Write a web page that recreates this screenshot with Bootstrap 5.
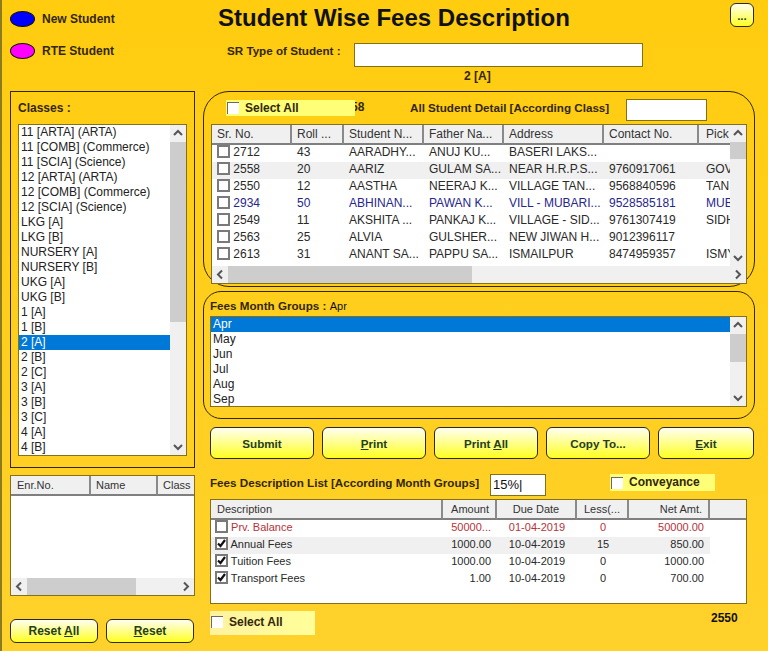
<!DOCTYPE html>
<html lang="en">
<head>
    <meta charset="UTF-8">
    <title>Student Wise Fees Description</title>
    <link href="https://cdn.jsdelivr.net/npm/bootstrap@5.3.3/dist/css/bootstrap.min.css" rel="stylesheet">
    <style>
        html, body { height: 100%; }
        body { width: 768px; height: 651px; overflow: hidden; background: linear-gradient(#ffcc0f, #ffd12b); border-left: 2px solid #8a7a20; font: 12px/15px "Liberation Sans", Arial, sans-serif; color: #111; }
        .lbl { font-weight: 700; color: #33270a; }
        .tight { font-size: 11.65px; }
        .top-area { height: 91px; }
        .legend-box { width: 201px; padding: 3px 0 0 8px; }
        .legend-row { height: 32px; gap: 7px; }
        .oval { width: 25px; height: 16px; border-radius: 50%; border: 1px solid #111; margin-bottom: 1px; }
        .oval-blue { background: #0000ff; }
        .oval-pink { background: #ff00ff; }
        .title-box { width: 500px; }
        .page-title { font: 700 24px/28px "Liberation Sans", Arial, sans-serif; color: #111; margin: 4px 0 0 15px; }
        .type-row { margin-top: 11px; height: 24px; }
        .type-row .lbl { margin: 0 0 10px 24px; width: 127px; }
        .white-input { background: #fff; border: 1px solid #85701a; border-radius: 0; padding: 0 2px; height: 24px; }
        .type-input { width: 289px; }
        .class-name { margin: 2px 0 0 261px; }
        .dots-btn { width: 24px; height: 24px; margin: 3px 0 0 27px; padding: 0 !important; font-size: 10px; border-radius: 6px !important; }
        .main-area { gap: 8px; padding-left: 8px; }
        .left-col { width: 185px; }
        .right-col { width: 552px; }
        .class-panel { height: 377px; border: 1px solid #33270a; padding: 8px 7px 0; }
        .class-panel > .lbl { height: 24px; line-height: 16px; }
        .listing { background: #fff; border: 1px solid #85701a; overflow: hidden; }
        .class-list { height: 332px; }
        .list-items { min-width: 0; color: #222; }
        .list-items div { height: 15px; line-height: 15px; padding-left: 2px; white-space: nowrap; }
        .list-items .picked { background: #0078d7; color: #fff; }
        .vbar { width: 16px; flex: none; background: #f0f0f0; }
        .hbar { height: 17px; flex: none; background: #f0f0f0; }
        .bar-btn { flex: none; color: #555; width: 16px; height: 17px; }
        .bar-thumb { background: #cdcdcd; }
        .panel-round { border: 1px solid #33270a; }
        .students-panel { height: 196px; border-radius: 26px; padding: 8px 7px 0; }
        .chk-label { background: #ffff77; gap: 6px; font-weight: 700; color: #33270a; }
        .select-one { width: 129px; height: 16px; margin-left: 15px; position: relative; z-index: 1; }
        .count-text { margin-left: -4px; width: 59px; }
        .detail-text { width: 216px; }
        .count-input { width: 81px; height: 22px; margin-top: -1px; }
        .head-row { height: 24px; }
        .chk { display: inline-block; width: 13px; height: 13px; border: 2px solid #7a7a7a; background: #fff; vertical-align: -2px; flex: none; }
        .chk svg { display: block; width: 9px; height: 9px; }
        .chk-flat { width: 12px; height: 12px; border-width: 1px 0 0 1px; border-color: #6a6a6a; margin-left: 1px; }
        .student-grid { height: 160px; }
        .student-grid tr > :last-child { padding-left: 7px; }
        .grid-wrap { background: #fff; border: 1px solid #85701a; overflow: hidden; }
        .grid-body { min-width: 0; overflow: hidden; }
        .gridtbl { table-layout: fixed; margin: 0; font-size: 12px; line-height: 15px; --bs-table-bg: transparent; color: #2a2a2a; border-collapse: separate; border-spacing: 0; }
        .gridtbl th { height: 20px; padding: 2px 0 0 5px; font-weight: 400; background: #f0f0f0; border-bottom: 2px solid #7f7f7f; border-right: 2px solid #8a8a8a; white-space: nowrap; overflow: hidden; color: #333; }
        .gridtbl td { height: 17px; padding: 0 0 0 5px; border: 0; white-space: nowrap; overflow: hidden; }
        .small-grid { font-size: 11px; }
        .gridtbl .zebra td { background: #f0f0f0; }
        .gridtbl .blue-row td { color: #26268c; }
        .gridtbl .red-row td { color: #b5323a; }
        .gridtbl .no-fill { background: #fff !important; }
        .gridtbl .no-line { border-right: 0; }
        .gridtbl .end { text-align: right; padding-left: 0; padding-right: 6px; }
        .gridtbl .mid { text-align: center; padding-left: 0; }
        .months-panel { height: 128px; margin-top: 4px; border-radius: 18px; padding: 6px 7px 0 6px; }
        .months-panel .head-row { height: 18px; }
        .month-list { height: 91px; }
        .action-row { margin-top: 8px; padding-left: 7px; gap: 8px; }
        .yel-btn { background: linear-gradient(#fffff2, #ffff22); border: 1px solid #2b2b1a; border-radius: 6px; color: #24401a; font: 700 11.65px/15px "Liberation Sans", Arial, sans-serif; padding: 0; }
        .yel-btn:hover { background: linear-gradient(#fffff2, #ffff22); border-color: #2b2b1a; color: #24401a; }
        .action-row .yel-btn { width: 104px; height: 32px; }
        .action-row .exit-btn { width: 96px; }
        .fees-head { margin-top: 16px; padding-left: 7px; height: 24px; }
        .fees-head .lbl { width: 280px; }
        .pct-input { width: 56px; height: 22px; line-height: 20px; font-size: 13px; margin-top: -1px; }
        .convey { width: 105px; height: 17px; margin-left: 64px; margin-top: -1px; }
        .fees-grid { height: 105px; margin-left: 7px; width: 537px; }
        .fees-grid td:first-child { padding-left: 4px; }
        .fees-grid th:first-child { padding-left: 6px; }
        .fees-foot { margin: 7px 0 0 7px; }
        .select-two { width: 105px; height: 24px; gap: 6px; background: linear-gradient(90deg, #fff2a0, #ffff99); padding-bottom: 2px; }
        .roll-no { margin-left: 396px; font-weight: 700; }
        .mini-grid { height: 121px; margin-top: 7px; }
        .mini-grid th:first-child { padding-left: 6px; }
        .reset-row { margin-top: 23px; gap: 8px; }
        .reset-row .yel-btn { width: 88px; height: 24px; font-size: 12px; }
    </style>
</head>
<body>

<svg width="0" height="0" class="position-absolute">
    <symbol id="up" viewBox="0 0 16 17"><path d="M4 10l4-4 4 4" fill="none" stroke="#555" stroke-width="2"/></symbol>
    <symbol id="down" viewBox="0 0 16 17"><path d="M4 7l4 4 4-4" fill="none" stroke="#555" stroke-width="2"/></symbol>
    <symbol id="left" viewBox="0 0 16 17"><path d="M10 4.500l-4 4 4 4" fill="none" stroke="#555" stroke-width="2"/></symbol>
    <symbol id="right" viewBox="0 0 16 17"><path d="M6 4.500l4 4-4 4" fill="none" stroke="#555" stroke-width="2"/></symbol>
    <symbol id="tick" viewBox="0 0 9 9"><path d="M1 4.500l2.500 2.500 4.500-6" fill="none" stroke="#111" stroke-width="2.200"/></symbol>
</svg>

<div class="top-area d-flex">
    <div class="legend-box">
        <div class="legend-row d-flex align-items-center lbl"><span class="oval oval-blue"></span>New Student</div>
        <div class="legend-row d-flex align-items-center lbl"><span class="oval oval-pink"></span>RTE Student</div>
    </div>
    <div class="title-box">
        <h1 class="page-title">Student Wise Fees Description</h1>
        <div class="type-row d-flex align-items-center">
            <span class="lbl tight">SR Type of Student :</span>
            <div class="white-input type-input"></div>
        </div>
        <div class="class-name lbl">2 [A]</div>
    </div>
    <button class="btn yel-btn dots-btn" type="button">...</button>
</div>

<div class="main-area d-flex">
    <div class="left-col">
        <div class="class-panel">
            <div class="lbl">Classes :</div>
            <div class="listing class-list d-flex">
                <div class="list-items flex-grow-1">
                    <div>11 [ARTA] (ARTA)</div>
                    <div>11 [COMB] (Commerce)</div>
                    <div>11 [SCIA] (Science)</div>
                    <div>12 [ARTA] (ARTA)</div>
                    <div>12 [COMB] (Commerce)</div>
                    <div>12 [SCIA] (Science)</div>
                    <div>LKG [A]</div>
                    <div>LKG [B]</div>
                    <div>NURSERY [A]</div>
                    <div>NURSERY [B]</div>
                    <div>UKG [A]</div>
                    <div>UKG [B]</div>
                    <div>1 [A]</div>
                    <div>1 [B]</div>
                    <div class="picked">2 [A]</div>
                    <div>2 [B]</div>
                    <div>2 [C]</div>
                    <div>3 [A]</div>
                    <div>3 [B]</div>
                    <div>3 [C]</div>
                    <div>4 [A]</div>
                    <div>4 [B]</div>
                </div>
                <div class="vbar d-flex flex-column">
                    <svg class="bar-btn"><use href="#up"/></svg>
                    <div class="bar-thumb" style="height: 180px"></div>
                    <div class="flex-grow-1"></div>
                    <svg class="bar-btn"><use href="#down"/></svg>
                </div>
            </div>
        </div>

        <div class="grid-wrap mini-grid d-flex flex-column">
            <div class="grid-body flex-grow-1">
                <table class="table gridtbl small-grid" style="width: 183px">
                    <colgroup><col style="width: 80px"><col style="width: 67px"><col></colgroup>
                    <tr><th>Enr.No.</th><th>Name</th><th class="no-line">Class</th></tr>
                </table>
            </div>
            <div class="hbar d-flex">
                <svg class="bar-btn"><use href="#left"/></svg>
                <div class="bar-thumb" style="width: 109px"></div>
                <div class="flex-grow-1"></div>
                <svg class="bar-btn"><use href="#right"/></svg>
            </div>
        </div>

        <div class="reset-row d-flex">
            <button class="btn yel-btn" type="button">Reset <u>A</u>ll</button>
            <button class="btn yel-btn" type="button"><u>R</u>eset</button>
        </div>
    </div>

    <div class="right-col">
        <div class="panel-round students-panel">
            <div class="head-row d-flex">
                <div class="chk-label select-one d-flex align-items-center"><span class="chk chk-flat"></span>Select All</div>
                <span class="count-text lbl">58</span>
                <span class="detail-text lbl tight">All Student Detail [According Class]</span>
                <div class="white-input count-input"></div>
            </div>
            <div class="grid-wrap student-grid d-flex flex-column">
                <div class="d-flex flex-grow-1" style="min-height: 0">
                    <div class="grid-body flex-grow-1">
                        <table class="table gridtbl" style="width: 525px">
                            <colgroup>
                                <col style="width: 80px"><col style="width: 52px"><col style="width: 80px"><col style="width: 80px">
                                <col style="width: 100px"><col style="width: 95px"><col style="width: 38px">
                            </colgroup>
                            <tr><th>Sr. No.</th><th>Roll ...</th><th>Student N...</th><th>Father Na...</th><th>Address</th><th>Contact No.</th><th class="no-line">Pick</th></tr>
                            <tr><td><span class="chk"></span> 2712</td><td>43</td><td>AARADHY...</td><td>ANUJ KU...</td><td>BASERI LAKS...</td><td></td><td></td></tr>
                            <tr class="zebra"><td><span class="chk"></span> 2558</td><td>20</td><td>AARIZ</td><td>GULAM SA...</td><td>NEAR H.R.P.S...</td><td>9760917061</td><td>GOV</td></tr>
                            <tr><td><span class="chk"></span> 2550</td><td>12</td><td>AASTHA</td><td>NEERAJ K...</td><td>VILLAGE TAN...</td><td>9568840596</td><td>TAN</td></tr>
                            <tr class="blue-row"><td><span class="chk"></span> 2934</td><td>50</td><td>ABHINAN...</td><td>PAWAN K...</td><td>VILL - MUBARI...</td><td>9528585181</td><td>MUB</td></tr>
                            <tr><td><span class="chk"></span> 2549</td><td>11</td><td>AKSHITA ...</td><td>PANKAJ K...</td><td>VILLAGE - SID...</td><td>9761307419</td><td>SIDH</td></tr>
                            <tr><td><span class="chk"></span> 2563</td><td>25</td><td>ALVIA</td><td>GULSHER...</td><td>NEW JIWAN H...</td><td>9012396117</td><td></td></tr>
                            <tr><td><span class="chk"></span> 2613</td><td>31</td><td>ANANT SA...</td><td>PAPPU SA...</td><td>ISMAILPUR</td><td>8474959357</td><td>ISMY</td></tr>
                        </table>
                    </div>
                    <div class="vbar d-flex flex-column">
                        <svg class="bar-btn"><use href="#up"/></svg>
                        <div class="bar-thumb" style="height: 17px"></div>
                        <div class="flex-grow-1"></div>
                        <svg class="bar-btn"><use href="#down"/></svg>
                    </div>
                </div>
                <div class="hbar d-flex">
                    <svg class="bar-btn"><use href="#left"/></svg>
                    <div class="bar-thumb" style="width: 244px"></div>
                    <div class="flex-grow-1"></div>
                    <svg class="bar-btn"><use href="#right"/></svg>
                </div>
            </div>
        </div>

        <div class="panel-round months-panel">
            <div class="head-row"><span class="lbl tight">Fees Month Groups :</span> <span style="font-size: 11px">Apr</span></div>
            <div class="listing month-list d-flex">
                <div class="list-items flex-grow-1">
                    <div class="picked">Apr</div>
                    <div>May</div>
                    <div>Jun</div>
                    <div>Jul</div>
                    <div>Aug</div>
                    <div>Sep</div>
                </div>
                <div class="vbar d-flex flex-column">
                    <svg class="bar-btn"><use href="#up"/></svg>
                    <div class="bar-thumb" style="height: 28px"></div>
                    <div class="flex-grow-1"></div>
                    <svg class="bar-btn"><use href="#down"/></svg>
                </div>
            </div>
        </div>

        <div class="action-row d-flex">
            <button class="btn yel-btn" type="button">Submit</button>
            <button class="btn yel-btn" type="button"><u>P</u>rint</button>
            <button class="btn yel-btn" type="button">Print <u>A</u>ll</button>
            <button class="btn yel-btn" type="button">Copy To...</button>
            <button class="btn yel-btn exit-btn" type="button"><u>E</u>xit</button>
        </div>

        <div class="fees-head d-flex">
            <span class="lbl tight">Fees Description List [According Month Groups]</span>
            <div class="white-input pct-input">15%|</div>
            <div class="chk-label convey d-flex align-items-center"><span class="chk chk-flat"></span>Conveyance</div>
        </div>

        <div class="grid-wrap fees-grid">
            <table class="table gridtbl small-grid" style="width: 535px">
                <colgroup>
                    <col style="width: 232px"><col style="width: 54px"><col style="width: 80px"><col style="width: 52px"><col style="width: 81px"><col>
                </colgroup>
                <tr><th>Description</th><th class="end">Amount</th><th class="mid">Due Date</th><th class="mid">Less(...</th><th class="end">Net Amt.</th><th class="no-line"></th></tr>
                <tr class="red-row"><td><span class="chk"></span> Prv. Balance</td><td class="end">50000...</td><td class="mid">01-04-2019</td><td class="mid">0</td><td class="end">50000.00</td><td></td></tr>
                <tr class="zebra"><td><span class="chk"><svg><use href="#tick"/></svg></span> Annual Fees</td><td class="end">1000.00</td><td class="mid">10-04-2019</td><td class="mid">15</td><td class="end">850.00</td><td class="no-fill"></td></tr>
                <tr><td><span class="chk"><svg><use href="#tick"/></svg></span> Tuition Fees</td><td class="end">1000.00</td><td class="mid">10-04-2019</td><td class="mid">0</td><td class="end">1000.00</td><td></td></tr>
                <tr><td><span class="chk"><svg><use href="#tick"/></svg></span> Transport Fees</td><td class="end">1.00</td><td class="mid">10-04-2019</td><td class="mid">0</td><td class="end">700.00</td><td></td></tr>
            </table>
        </div>

        <div class="fees-foot d-flex">
            <div class="chk-label select-two d-flex align-items-center"><span class="chk chk-flat"></span>Select All</div>
            <span class="roll-no">2550</span>
        </div>
    </div>
</div>

<script src="https://cdn.jsdelivr.net/npm/bootstrap@5.3.3/dist/js/bootstrap.bundle.min.js"></script>
</body>
</html>
